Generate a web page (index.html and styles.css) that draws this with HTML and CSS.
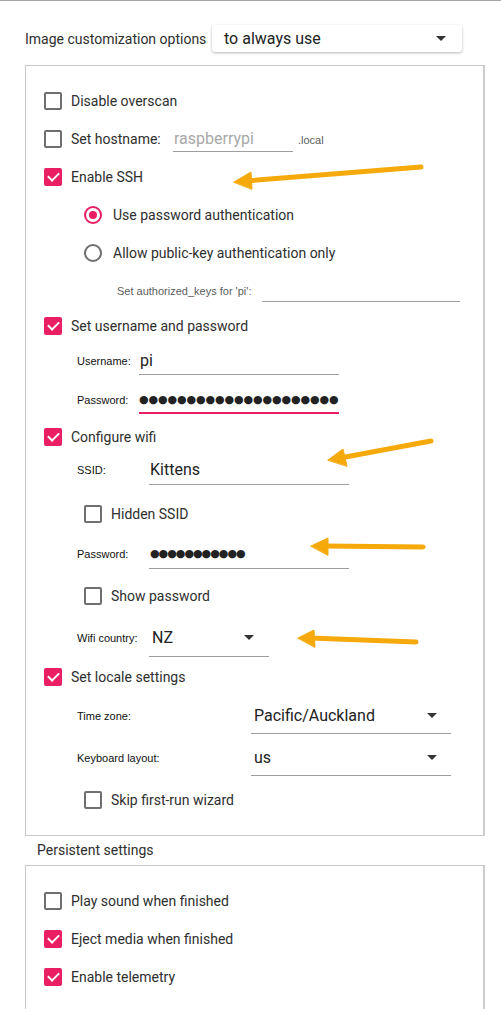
FILE: index.html
```html
<!DOCTYPE html>
<html lang="en">
<head>
  <meta charset="UTF-8">
  <title>Image customization options</title>
  <meta name="viewport" content="width=device-width,initial-scale=1.0">
  <link rel="stylesheet" href="styles.css">
</head>
<body>
  <div id="page">
    <div class="top-row">
      <span class="top-label">Image customization options</span>
      <div class="combo combo-raised"><span>to always use</span><i class="caret"></i></div>
    </div>

    <div class="panel">
      <div class="row"><span class="box"></span>Disable overscan</div>
      <div class="row">
        <span class="box"></span><span class="host-label">Set hostname:</span>
        <div class="field host-field placeholder">raspberrypi</div>
        <span class="small muted suffix">.local</span>
      </div>
      <div class="row"><span class="box checked"></span>Enable SSH</div>
      <div class="row sub"><span class="radio checked"></span>Use password authentication</div>
      <div class="row sub"><span class="radio"></span>Allow public-key authentication only</div>
      <div class="row auth-row">
        <span class="small muted auth-label">Set authorized_keys for 'pi':</span>
        <div class="field auth-field"></div>
      </div>

      <div class="row tight"><span class="box checked"></span>Set username and password</div>
      <div class="row field-row tight">
        <span class="small lbl-user">Username:</span>
        <div class="field user-field">pi</div>
      </div>
      <div class="row field-row nudge">
        <span class="small lbl-user">Password:</span>
        <div class="field pass-field focused"><span class="dots">●●●●●●●●●●●●●●●●●●●●●</span></div>
      </div>

      <div class="row pull"><span class="box checked"></span>Configure wifi</div>
      <div class="row field-row tighter">
        <span class="small lbl-wifi">SSID:</span>
        <div class="field wifi-field">Kittens</div>
      </div>
      <div class="row sub looser"><span class="box"></span>Hidden SSID</div>
      <div class="row field-row nudge2">
        <span class="small lbl-wifi">Password:</span>
        <div class="field wifi-field"><span class="dots dots-wifi">●●●●●●●●●●●</span></div>
      </div>
      <div class="row sub loose"><span class="box"></span>Show password</div>
      <div class="row field-row loose">
        <span class="small lbl-wifi">Wifi country:</span>
        <div class="field combo country-field"><span>NZ</span><i class="caret"></i></div>
      </div>

      <div class="row nudge"><span class="box checked"></span>Set locale settings</div>
      <div class="row field-row nudge">
        <span class="small lbl-locale">Time zone:</span>
        <div class="field combo locale-field"><span>Pacific/Auckland</span><i class="caret"></i></div>
      </div>
      <div class="row field-row loose">
        <span class="small lbl-locale">Keyboard layout:</span>
        <div class="field combo locale-field"><span>us</span><i class="caret"></i></div>
      </div>
      <div class="row sub loose"><span class="box"></span>Skip first-run wizard</div>
    </div>

    <div class="section-title">Persistent settings</div>

    <div class="panel panel-persist">
      <div class="row"><span class="box"></span>Play sound when finished</div>
      <div class="row"><span class="box checked"></span>Eject media when finished</div>
      <div class="row"><span class="box checked"></span>Enable telemetry</div>
    </div>

    <svg class="arrows" width="501" height="1009" viewBox="0 0 501 1009">
      <g fill="#f6a90b" stroke="#f6a90b" stroke-linecap="round" stroke-linejoin="round">
        <line x1="421" y1="166" x2="246" y2="180" stroke-width="5"/>
        <polygon points="234,181 251,171 252,188" stroke-width="1"/>
        <line x1="431" y1="440" x2="340" y2="457" stroke-width="5"/>
        <polygon points="328,459 343,448 347,465" stroke-width="1"/>
        <line x1="423" y1="546" x2="324" y2="545" stroke-width="5"/>
        <polygon points="311,545 328,537 328,554" stroke-width="1"/>
        <line x1="416" y1="641" x2="310" y2="637" stroke-width="5"/>
        <polygon points="298,637 314,629 315,646" stroke-width="1"/>
      </g>
    </svg>
  </div>
</body>
</html>
```

FILE: styles.css
```css
html, body {margin:0; padding:0; background:#fff;}
body {font-family:Roboto, "Noto Sans", sans-serif; font-size:14px; color:#2e2e2e; border-top:1px solid #a6a6a6;}
#page {position:relative; width:501px; height:1008px; overflow:hidden;}

.top-row {display:flex; align-items:center; gap:7px; padding:24px 0 0 25px;}
.top-label {width:180px; white-space:nowrap;}

.combo {display:flex; align-items:center; justify-content:space-between; box-sizing:border-box; font-size:16px; color:#222;}
.combo-raised {width:250px; height:27px; padding:0 16px 0 12px; background:#fff; border-radius:3px; box-shadow:0 1px 3px rgba(0,0,0,0.28);}
.caret {display:block; width:0; height:0; border-left:5px solid transparent; border-right:5px solid transparent; border-top:5px solid #333;}

.panel {margin:13px 0 0 25px; width:460px; box-sizing:border-box; border:1px solid #c9c9c9; border-right:2px solid #cdcdcd; padding:16px 0 16px 18px;}
.panel-persist {margin-top:0; padding-top:16px; padding-bottom:60px;}

.row {display:flex; align-items:center; height:38px; white-space:nowrap;}
.row.tight {margin-top:-3px;}
.row.tighter {margin-top:-5px;}
.row.pull {margin-top:-1px;}
.row.nudge {margin-top:1px;}
.row.nudge2 {margin-top:2px;}
.row.loose {margin-top:4px;}
.row.looser {margin-top:6px;}
.sub {padding-left:40px;}
.field-row {padding-left:33px;}
.auth-row {padding-left:73px;}

.box {width:18px; height:18px; box-sizing:border-box; border:2px solid #6f6f6f; border-radius:2px; margin-right:9px; flex:none; position:relative;}
.box.checked {background:#e91e63; border-color:#e91e63;}
.box.checked::after {content:""; position:absolute; left:4px; top:0px; width:5px; height:9px; border:solid #fff; border-width:0 2.5px 2.5px 0; transform:rotate(45deg);}

.radio {width:18px; height:18px; box-sizing:border-box; border:2px solid #6f6f6f; border-radius:50%; margin-right:11px; flex:none; position:relative;}
.radio.checked {border-color:#e91e63;}
.radio.checked::after {content:""; position:absolute; left:3px; top:3px; width:8px; height:8px; border-radius:50%; background:#e91e63;}

.small {font-family:"Liberation Sans", Arial, sans-serif; font-size:11px; color:#111;}
.muted {color:#5c5c5c;}

.field {box-sizing:border-box; border-bottom:1px solid #9e9e9e; display:flex; align-items:center; font-size:16px; color:#222;}
.field.focused {border-bottom:2px solid #e91e63;}
.placeholder {color:#a8a8a8;}

.host-label {width:102px;}
.host-field {width:120px; height:26px; padding-left:1px;}
.suffix {margin-left:5px; margin-top:2px;}

.auth-label {width:145px;}
.auth-field {width:198px; height:22px;}

.lbl-user {width:62px;}
.user-field {width:200px; height:28px; padding-left:1px;}
.pass-field {width:200px; height:27px;}

.lbl-wifi {width:72px;}
.wifi-field {width:200px; height:30px; padding-left:1px;}
.country-field {width:120px; height:38px; padding:0 15px 0 3px;}

.lbl-locale {width:174px;}
.locale-field {width:200px; height:36px; padding:0 14px 0 3px;}

.dots {font-family:"DejaVu Sans", sans-serif; font-size:11px; letter-spacing:-0.1px; color:#222;}
.dots-wifi {letter-spacing:-1px;}

.section-title {padding:6px 0 0 37px; height:23px;}

.arrows {position:absolute; left:0; top:0; pointer-events:none;}
```
